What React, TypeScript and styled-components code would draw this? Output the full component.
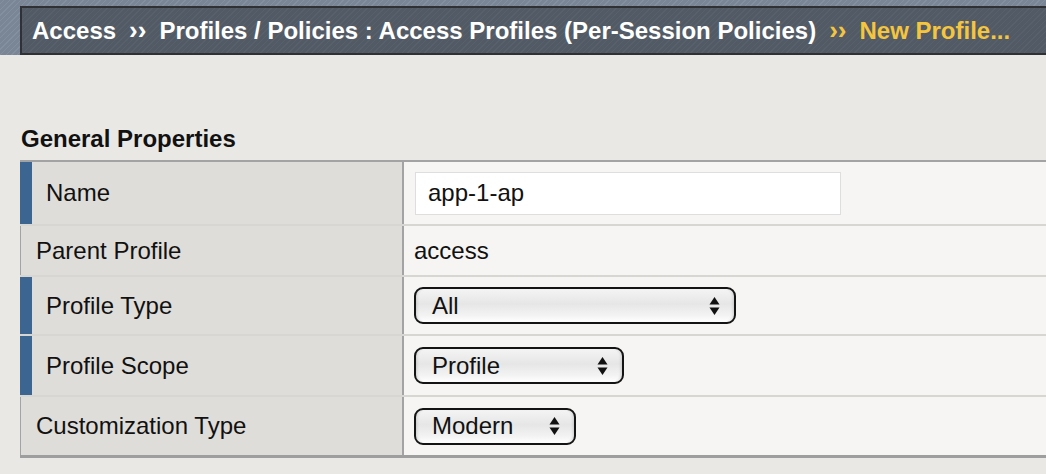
import React from "react";
import styled, { createGlobalStyle } from "styled-components";

const Global = createGlobalStyle`
  html, body { margin: 0; padding: 0; }
  body {
    background: #e9e8e4;
    font-family: "Liberation Sans", Arial, Helvetica, sans-serif;
    overflow: hidden;
  }
`;

const Page = styled.div`
  width: 1046px;
  height: 474px;
  overflow: hidden;
  background: #e9e8e4;
`;

const Header = styled.header`
  height: 55px;
  box-sizing: border-box;
  padding: 6px 0 0 20px;
  background: repeating-linear-gradient(
    -45deg,
    #7a8695 0px,
    #7a8695 3px,
    #8390a0 3px,
    #8390a0 4px
  );
`;

const Crumbs = styled.nav`
  height: 49px;
  box-sizing: border-box;
  border: 2px solid #2f3134;
  border-right: none;
  background: repeating-linear-gradient(
    -45deg,
    #525b65 0px,
    #525b65 3px,
    #58616b 3px,
    #58616b 4px
  );
  display: flex;
  align-items: center;
  padding-left: 10px;
  white-space: nowrap;
  font-weight: bold;
  font-size: 24px;
  color: #ffffff;
`;

const Sep = styled.span<{ $gold?: boolean }>`
  margin: 0 13px;
  font-size: 26px;
  color: ${(p) => (p.$gold ? "#f5c53d" : "#ffffff")};
`;

const Current = styled.span`
  color: #f5c53d;
`;

const Section = styled.section`
  padding: 72px 0 0 20px;
`;

const Title = styled.h2`
  margin: 0 0 9px 1px;
  font-size: 24px;
  font-weight: bold;
  color: #111;
  line-height: 24px;
`;

const Table = styled.div`
  border-top: 2px solid #a3a3a3;
  border-bottom: 3px solid #9e9e9e;
  width: 1100px;
`;

const Row = styled.div<{ $h: number }>`
  display: grid;
  grid-template-columns: 384px 1fr;
  height: ${(p) => p.$h}px;
  border-bottom: 2px solid #d8d6d2;
  &:last-child { border-bottom: none; }
`;

const Label = styled.div<{ $req?: boolean }>`
  background: #dfddd9;
  border-left: ${(p) => (p.$req ? "12px solid #3d6591" : "1px solid #a3a3a3")};
  border-right: 2px solid #a3a3a3;
  padding-left: ${(p) => (p.$req ? "14px" : "15px")};
  display: flex;
  align-items: center;
  font-size: 24px;
  color: #111;
`;

const Value = styled.div`
  background: #f6f5f3;
  padding-left: 10px;
  display: flex;
  align-items: center;
  font-size: 24px;
  color: #111;
`;

const TextInput = styled.div`
  width: 426px;
  height: 43px;
  box-sizing: border-box;
  background: #fff;
  border: 1px solid #dedede;
  padding-left: 12px;
  display: flex;
  align-items: center;
  margin-left: 1px;
  font-size: 24px;
`;

const Select = styled.div<{ $w: number }>`
  width: ${(p) => p.$w}px;
  height: 37px;
  box-sizing: border-box;
  border: 2px solid #141414;
  border-radius: 9px;
  background: linear-gradient(to bottom, #f4f4f4 0%, #e6e6e6 45%, #f3f3f3 80%, #ffffff 100%);
  box-shadow: inset 3px 0 3px -2px rgba(0,0,0,0.15), inset -3px 0 3px -2px rgba(0,0,0,0.15);
  display: flex;
  align-items: center;
  justify-content: space-between;
  padding: 0 14px 0 16px;
  font-size: 24px;
  color: #111;
`;

const Arrows = () => (
  <svg width="11" height="20" viewBox="0 0 11 20">
    <path d="M5.5 1 L10.5 8.5 L0.5 8.5 Z" fill="#111" />
    <path d="M5.5 19 L10.5 11.5 L0.5 11.5 Z" fill="#111" />
  </svg>
);

export default function App() {
  return (
    <Page>
      <Global />
      <Header>
        <Crumbs>
          Access<Sep>››</Sep>Profiles / Policies : Access Profiles (Per-Session Policies)
          <Sep $gold>››</Sep>
          <Current>New Profile...</Current>
        </Crumbs>
      </Header>
      <Section>
        <Title>General Properties</Title>
        <Table>
          <Row $h={62}>
            <Label $req>Name</Label>
            <Value>
              <TextInput>app-1-ap</TextInput>
            </Value>
          </Row>
          <Row $h={49}>
            <Label>Parent Profile</Label>
            <Value>access</Value>
          </Row>
          <Row $h={57}>
            <Label $req>Profile Type</Label>
            <Value>
              <Select $w={322}>
                All
                <Arrows />
              </Select>
            </Value>
          </Row>
          <Row $h={59}>
            <Label $req>Profile Scope</Label>
            <Value>
              <Select $w={210}>
                Profile
                <Arrows />
              </Select>
            </Value>
          </Row>
          <Row $h={58}>
            <Label>Customization Type</Label>
            <Value>
              <Select $w={162}>
                Modern
                <Arrows />
              </Select>
            </Value>
          </Row>
        </Table>
      </Section>
    </Page>
  );
}
